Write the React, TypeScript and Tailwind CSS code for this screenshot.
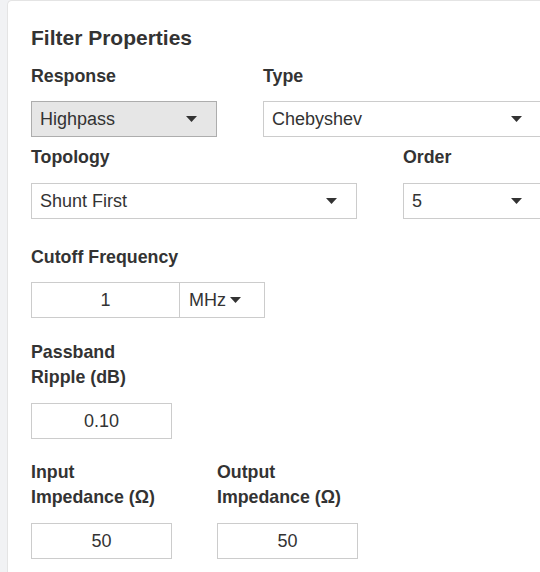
import React from "react";

const Caret = ({ className = "" }: { className?: string }) => (
  <svg width="11" height="6" viewBox="0 0 11 6" className={className}>
    <path d="M0 0 L11 0 L5.5 6 Z" fill="#333" />
  </svg>
);

const Label = ({ children }: { children: React.ReactNode }) => (
  <div className="text-[17.8px] font-bold leading-[25px] text-[#333]">{children}</div>
);

const Select = ({
  value,
  width,
  gray = false,
}: {
  value: string;
  width: string;
  gray?: boolean;
}) => (
  <div
    className={`${width} h-[36px] flex items-center justify-between pl-[8px] pr-[19px] border ${
      gray ? "bg-[#e6e6e6] border-[#adadad]" : "bg-white border-[#cccccc]"
    }`}
  >
    <span className="text-[18px] text-[#333]">{value}</span>
    <Caret />
  </div>
);

const Input = ({ value, width }: { value: string; width: string }) => (
  <div
    className={`${width} h-[36px] flex items-center justify-center border border-[#cccccc] bg-white text-[18px] text-[#333]`}
  >
    {value}
  </div>
);

export default function App() {
  return (
    <div
      className="w-[540px] h-[572px] overflow-hidden bg-[#f1f2f4] pl-[7px]"
      style={{ fontFamily: '"Liberation Sans", Arial, sans-serif' }}
    >
      <div className="w-[600px] h-[600px] bg-white rounded-tl-[5px] border-l border-t border-[#e4e4e4] pl-[23px] pt-[25px]">
        <div className="text-[21px] font-bold leading-[23px] text-[#333]">Filter Properties</div>

        <div className="flex mt-[15px]">
          <div className="w-[232px]">
            <Label>Response</Label>
            <div className="mt-[12px]">
              <Select value="Highpass" width="w-[186px]" gray />
            </div>
          </div>
          <div>
            <Label>Type</Label>
            <div className="mt-[12px]">
              <Select value="Chebyshev" width="w-[279px]" />
            </div>
          </div>
        </div>

        <div className="flex mt-[8px]">
          <div className="w-[372px]">
            <Label>Topology</Label>
            <div className="mt-[13px]">
              <Select value="Shunt First" width="w-[326px]" />
            </div>
          </div>
          <div>
            <Label>Order</Label>
            <div className="mt-[13px]">
              <Select value="5" width="w-[139px]" />
            </div>
          </div>
        </div>

        <div className="mt-[26px]">
          <Label>Cutoff Frequency</Label>
          <div className="mt-[12px] flex">
            <Input value="1" width="w-[149px]" />
            <div className="w-[85px] h-[36px] border border-l-0 border-[#cccccc] flex items-center pl-[9px] gap-[4px] text-[18px] text-[#333]">
              <span>MHz</span>
              <Caret />
            </div>
          </div>
        </div>

        <div className="mt-[22px]">
          <Label>
            Passband
            <br />
            Ripple (dB)
          </Label>
          <div className="mt-[13px]">
            <Input value="0.10" width="w-[141px]" />
          </div>
        </div>

        <div className="flex mt-[21px]">
          <div className="w-[186px]">
            <Label>
              Input
              <br />
              Impedance (Ω)
            </Label>
            <div className="mt-[13px]">
              <Input value="50" width="w-[141px]" />
            </div>
          </div>
          <div>
            <Label>
              Output
              <br />
              Impedance (Ω)
            </Label>
            <div className="mt-[13px]">
              <Input value="50" width="w-[141px]" />
            </div>
          </div>
        </div>
      </div>
    </div>
  );
}
